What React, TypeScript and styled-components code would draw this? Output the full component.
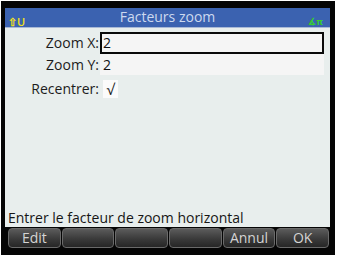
import React from "react";
import styled, { createGlobalStyle } from "styled-components";

const GlobalStyle = createGlobalStyle`
	html, body {
		margin: 0;
		padding: 0;
		background: #ffffff;
	}
	body {
		font-family: "Open Sans", "Noto Sans", sans-serif;
	}
`;

const Frame = styled.div`
	width: 337px;
	height: 257px;
	box-sizing: border-box;
	padding: 1px 2px 2px 1px;
	background: #ffffff;
`;

const Bezel = styled.div`
	height: 100%;
	box-sizing: border-box;
	padding: 7px 5px 7px 4px;
	background: #050505;
	display: flex;
	flex-direction: column;
`;

const Header = styled.div`
	height: 19px;
	background: #3b62b0;
	border-bottom: 1px solid #a9b9d6;
	display: flex;
	align-items: flex-end;
	justify-content: space-between;
	position: relative;
	padding: 0 7px 0 3px;
`;

const Title = styled.div`
	position: absolute;
	left: 0;
	right: 0;
	top: -1px;
	text-align: center;
	font-size: 14px;
	line-height: 19px;
	color: #cdd9ef;
`;

const ShiftMark = styled.span`
	font-size: 11px;
	line-height: 11px;
	color: #f2e21a;
	font-weight: 600;
`;

const AngleMark = styled.span`
	font-size: 9px;
	line-height: 10px;
	color: #35d02c;
	font-weight: 700;
`;

const Screen = styled.div`
	flex: 1;
	background: #e8eeed;
	display: flex;
	flex-direction: column;
	padding-top: 4px;
`;

const Form = styled.div`
	display: grid;
	grid-template-columns: 95px 224px;
	grid-template-rows: 22px 21px 22px;
`;

const Label = styled.div<{ $tall?: boolean }>`
	font-size: 14px;
	color: #1c1c1c;
	text-align: right;
	line-height: ${(p) => (p.$tall ? "28px" : "21px")};
	padding-right: 1px;
	white-space: nowrap;
`;

const Field = styled.div<{ $active?: boolean }>`
	box-sizing: border-box;
	background: #f5f5f5;
	border: 2px solid ${(p) => (p.$active ? "#0a0a0a" : "transparent")};
	font-size: 14px;
	line-height: 17px;
	color: #111;
	padding-left: 1px;
`;

const CheckCell = styled.div`
	display: flex;
	align-items: center;
	padding-top: 5px;
`;

const CheckBox = styled.div`
	width: 15px;
	height: 18px;
	margin-left: 3px;
	background: #fbfbfb;
	display: flex;
	align-items: center;
	justify-content: center;
	font-size: 15px;
	line-height: 18px;
	color: #222;
`;

const Spacer = styled.div`
	flex: 1;
`;

const Help = styled.div`
	font-size: 14px;
	line-height: 19px;
	color: #161616;
	padding-left: 3px;
	white-space: nowrap;
`;

const Keys = styled.div`
	height: 20px;
	display: grid;
	grid-template-columns: repeat(6, 1fr);
	column-gap: 1px;
	padding: 1px 1px 0 3px;
	background: #050505;
`;

const Key = styled.div`
	border-radius: 4px;
	border: 1px solid #6a6a6a;
	background: linear-gradient(#5b5b5b, #3a3a3a 55%, #262626);
	color: #d4d4d4;
	font-size: 14px;
	line-height: 18px;
	text-align: center;
`;

const keys = ["Edit", "", "", "", "Annul", "OK"];

export default function App() {
	return (
		<>
			<GlobalStyle />
			<Frame>
				<Bezel>
					<Header>
						<ShiftMark>⇧U</ShiftMark>
						<Title>Facteurs zoom</Title>
						<AngleMark>∡π</AngleMark>
					</Header>
					<Screen>
						<Form>
							<Label>Zoom X:</Label>
							<Field $active>2</Field>
							<Label>Zoom Y:</Label>
							<Field>2</Field>
							<Label $tall>Recentrer:</Label>
							<CheckCell>
								<CheckBox>√</CheckBox>
							</CheckCell>
						</Form>
						<Spacer />
						<Help>Entrer le facteur de zoom horizontal</Help>
					</Screen>
					<Keys>
						{keys.map((k, i) => (
							<Key key={i}>{k}</Key>
						))}
					</Keys>
				</Bezel>
			</Frame>
		</>
	);
}
